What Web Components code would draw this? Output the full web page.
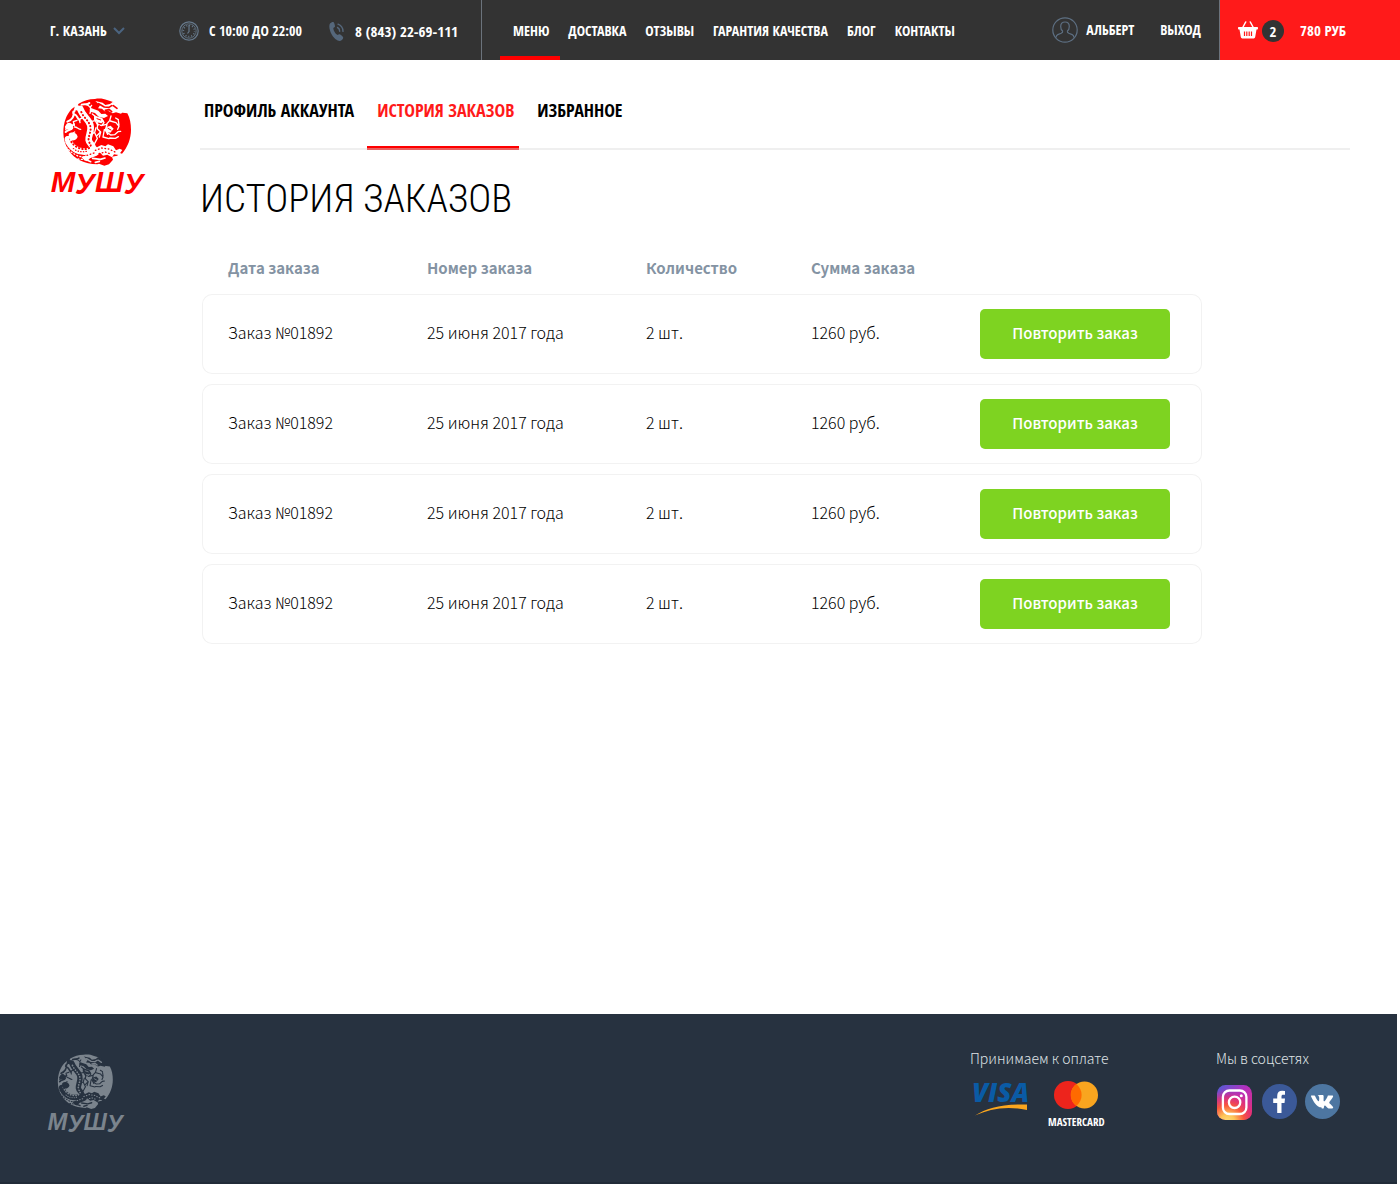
<!DOCTYPE html>
<html lang="ru">
<head>
<meta charset="utf-8">
<meta name="viewport" content="width=device-width, initial-scale=1">
<title>Мушу — история заказов</title>
<style>
  :root {
    --font-head: "Open Sans Condensed", "Roboto Condensed", sans-serif;
    --font-title: "Roboto Condensed", "Roboto", sans-serif;
    --font-body: "Noto Sans CJK SC", "Noto Sans", sans-serif;
    --red: #ff1a1a;
    --dark: #333333;
  }
  body { margin: 0; background: #fff; font-family: var(--font-body); color: #000; }
</style>
</head>
<body>
<account-page>
  <top-bar slot="header"></top-bar>
  <mushu-logo slot="logo"></mushu-logo>
  <account-tabs></account-tabs>
  <order-history></order-history>
  <page-footer slot="footer"></page-footer>
</account-page>

<script>
function define(name, html, setup) {
  const tpl = document.createElement('template');
  tpl.innerHTML = html;
  customElements.define(name, class extends HTMLElement {
    constructor() {
      super();
      this.attachShadow({ mode: 'open' }).append(tpl.content.cloneNode(true));
      if (setup) setup(this.shadowRoot, this);
    }
  });
}

define('account-page', `
<style>
  :host { display: flex; flex-direction: column; min-height: 100vh; }
  main { flex: 1; display: flex; padding: 0 50px; }
  aside { flex: none; width: 150px; padding-top: 38px; }
  section { flex: 1; min-width: 0; }
</style>
<slot name="header"></slot>
<main>
  <aside><slot name="logo"></slot></aside>
  <section><slot></slot></section>
</main>
<slot name="footer"></slot>`);

define('mushu-logo', `
<style>
  :host { display: block; width: 96px; color: #f00; --hole: #fff; }
  svg { display: block; width: 100%; height: auto; overflow: visible; }
  .h { fill: var(--hole); }
  .hs { fill: none; stroke: var(--hole); stroke-linecap: round; stroke-linejoin: round; }
  .rs { fill: none; stroke: currentColor; stroke-linecap: round; stroke-linejoin: round; }
  text { font: italic 700 88px "Liberation Sans", sans-serif; fill: currentColor; }
</style>
<svg viewBox="30 24 288 297" role="img" aria-label="Мушу">
  <path fill="currentColor" d="M165 27c12-3 27-1 36 3l18 6 14 10 8 9-5 5 12 8 14 2c8 14 11 31 11 49 0 27-10 52-27 72l-8-3-6 9-16 3 3 9-12 14-14 4-16-6-5 2c-40-1-68-15-86-42-10-15-16-35-16-53 0-30 9-54 25-71l8-6 8-3 5-7c15-9 30-14 49-14Z"/>
  <!-- tail and body -->
  <path class="hs" stroke-width="20" d="M121 57c7 22 25 30 30 48 5 20-7 32-5 45 2 12 16 15 10 26-7 12-35 11-49 2-12-8-20-18-23-30"/>
  <path class="rs" stroke-width="6" stroke-dasharray="1 9" d="M124 66c7 18 23 26 27 43 4 18-7 28-5 42 2 11 10 14 4 21-8 8-27 7-40-1-11-7-16-14-20-24"/>
  <path class="rs" stroke-width="4" stroke-dasharray="1 7" d="M139 184c-15 4-32 0-43-12"/>
  <!-- whorls left of the body -->
  <path class="hs" stroke-width="6" d="M111 45c-8 8-3 17-12 24M82 95c14-5 23-19 18-30M104 73c9 3 7 14 15 17M78 111c10-5 18 2 24-8M77 126c8-8 15-4 20-13M125 44c8-3 17 2 23-5"/>
  <path class="hs" stroke-width="4" d="M79 142c11-2 16-12 25-16M104 111c8 0 11 7 18 7M130 82l-12 6 2 10M111 91l-11 4 3 12M150 70c5-9-4-16 5-24M138 44c11 2 16 12 15 20"/>
  <path class="h" d="M77 106c6-11 15-9 20-2 5 10 0 17-7 16-5-3-12-2-15 2ZM86 132c9-8 24-4 27 8-2 11-18 15-25 8ZM104 50c7-7 16-4 18 3-2 8-10 10-16 7Z"/>
  <path class="hs" stroke-width="4" stroke-dasharray="3 7" d="M79 172l14 14 22 13 16 2M85 165l20 20 27 5M91 206l25 9M114 207l20 2M78 158l15 12"/>
  <!-- cloud at the top -->
  <path class="h" d="M166 33l22 5 8 7 14-3 9-7 15 8 9 11 11 7-11 10-15-4-10 3-14-8-10 2-8-8-12-1 6-9Z"/>
  <path class="rs" stroke-width="5" d="M176 41l17 10 14 1 8-5M196 61l12-2 7 6M220 47l11 8"/>
  <path class="h" d="M153 54l22 8 9 10 12-1 8 7-12 6-16-4-11-11-15-4Z"/>
  <!-- head, jaws and claws -->
  <path class="hs" stroke-width="4" d="M157 72l12 10 16 3 7 13-7 9-13-4-6-11-11 2M173 98l-1 18 10 10-4 15M184 107l15-4 10-11 4-14M201 104l-5 15 7 14M211 93l17 5 9 11-4 9M199 125l13 10 12-1 10-9 8-1M193 119l-4 22 18 5M235 92l2 13M227 84l8 5M209 144l17 1 9-5"/>
  <path class="h" d="M162 76l20 7 10 11-8 6-12-3-10-8ZM199 111l13-4 9 9-10 12-14-3Z"/>
  <path class="rs" stroke-width="3" d="M171 86l11 4M204 115l9 5M178 107l7 6"/>
  <path class="hs" stroke-width="4" d="M151 134l13-7 4-14M164 128l8 17-8 15M181 127l-9 9"/>
  <!-- foam at the bottom -->
  <path class="h" d="M159 163l12 9 13-7 12 4 8-6 16 6 8 12 11-5 8 4-11 15-14-2-6 9-14-8-13 3-8-8-11 8-20 8-9 9-8-3-9-10 12-4Z"/>
  <path class="rs" stroke-width="4" stroke-dasharray="2 8" d="M166 181l20-7 20 3 19 9M177 191l19-5 18 7M141 196l21-7"/>
  <path class="hs" stroke-width="5" d="M134 207l18 8M158 205l23 3 14-4M166 217l12-3"/>
  <text x="32" y="306 313 306 313">МУШУ</text>
</svg>`);

define('top-bar', `
<style>
  :host { display: block; background: var(--dark); color: #fff; font: 700 14px/60px var(--font-head); white-space: nowrap; }
  header { display: flex; height: 60px; }
  a, button { color: inherit; font: inherit; text-decoration: none; }
  svg { display: block; flex: none; }
  .info { display: flex; padding-left: 50px; border-right: 1px solid #6b737c; }
  .info > * { display: flex; align-items: center; box-sizing: border-box; height: 62px; }
  .city { width: 129px; gap: 6px; padding: 0; border: 0; background: none; text-align: left; }
  .hours { width: 150px; gap: 10px; }
  .phone { width: 152px; gap: 10px; font-size: 15px; }
  nav { display: flex; gap: 19px; padding-left: 31px; line-height: 62px; }
  nav a { position: relative; }
  nav a[aria-current]::after { content: ""; position: absolute; left: -13px; right: -11px; top: 56px; height: 4px; background: #f00; }
  .user { display: flex; margin-left: auto; gap: 26px; padding-right: 18px; }
  .user a { display: flex; align-items: center; gap: 8px; }
  .cart { box-sizing: border-box; width: 181px; display: flex; align-items: center; padding-left: 18px; background: var(--red); border-left: 1px solid #6b737c; font-size: 15px; }
  .count { width: 22px; margin: 2px 16px 0 4px; border-radius: 50%; background: var(--dark); text-align: center; line-height: 22px; }
</style>
<header>
  <div class="info">
    <button class="city" type="button">Г. КАЗАНЬ
      <svg width="12" height="8" viewBox="0 0 12 8" fill="none" stroke="#4b6480" stroke-width="2"><path d="M1 1l5 5 5-5"/></svg>
    </button>
    <span class="hours">
      <svg width="20" height="20" viewBox="0 0 20 20" fill="none" stroke="#66788a"><circle cx="10" cy="10" r="9.2" stroke-width="1.2"/><circle cx="10" cy="10" r="7.2" stroke-width=".8"/><circle cx="10" cy="10" r="5.6" stroke-width="1.6" stroke-dasharray="1 1.93" stroke-dashoffset=".5"/><path d="M10 4v6.500l-1.500 2" stroke-width="1.200"/></svg>
      С 10:00 ДО 22:00
    </span>
    <a class="phone" href="tel:+78432269111">
      <svg width="16" height="20" viewBox="0 0 16 20"><path fill="#55677b" d="M1 2.500C2 1.500 3.500.7 4.300 1c.8.200 1.900 3.600 1.700 4.600-.2.900-1.800 1-1.700 2 .2 2.300 2 5.200 3.900 6.200.9.500 1.600-.8 2.500-.6 1 .2 3.500 2.600 3.500 3.500 0 1-1.700 3-3.200 3.200C8.500 20.200 5 17.300 3 14 .8 10.300-.6 5 1 2.500Z"/><path d="M8.500 6.500c1.300.6 2.200 1.900 2.200 3.700M9 3.200c2.900 1 4.900 3.700 5 7.200" fill="none" stroke="#55677b" stroke-width="1.400" stroke-linecap="round"/></svg>
      8 (843) 22-69-111
    </a>
  </div>
  <nav>
    <a href="#menu" aria-current="page">МЕНЮ</a>
    <a href="#delivery">ДОСТАВКА</a>
    <a href="#reviews">ОТЗЫВЫ</a>
    <a href="#quality">ГАРАНТИЯ КАЧЕСТВА</a>
    <a href="#blog">БЛОГ</a>
    <a href="#contacts">КОНТАКТЫ</a>
  </nav>
  <div class="user">
    <a href="#profile">
      <svg width="26" height="26" viewBox="0 0 26 26" fill="none" stroke="#5d6f82" stroke-width="1.200"><circle cx="13" cy="13" r="12.200"/><path d="M13 5c2.800 0 4.300 1.800 4.300 4.500 0 1.900-.7 3.700-1.900 4.600-.3 1.300.2 1.700 1.400 2.200l3.400 1.300c.9.400 1.600 1.500 1.900 2.900M13 5c-2.800 0-4.300 1.800-4.300 4.500 0 1.900.7 3.700 1.900 4.600.3 1.300-.2 1.700-1.400 2.200l-3.400 1.300c-.9.400-1.600 1.500-1.900 2.900"/></svg>
      АЛЬБЕРТ
    </a>
    <a href="#exit">ВЫХОД</a>
  </div>
  <a class="cart" href="#cart">
    <svg width="20" height="18" viewBox="0 0 20 18"><path fill="#fff" d="M.7 6h18.600q.7 0 .7.800v.8q0 .9-.8.900h-.7l-1.300 7.600q-.2 1.400-1.500 1.400H4.300q-1.300 0-1.500-1.400L1.500 8.500H.8Q0 8.500 0 7.600v-.8Q0 6 .7 6Z"/><path d="M5 6l2.700-5M15 6l-2.700-5" stroke="#fff" stroke-width="1.500" stroke-linecap="round"/><path d="M6.500 10.500v4.500M8.800 10.500v4.500M11.200 10.500v4.500M13.500 10.500v4.500" stroke="#ff1a1a" stroke-width="1.200"/></svg>
    <span class="count">2</span>780 РУБ
  </a>
</header>`);

define('account-tabs', `
<style>
  :host { display: block; }
  nav { display: flex; gap: 8px; height: 88px; border-bottom: 2px solid #efefef; font: 700 18px/100px var(--font-head); white-space: nowrap; }
  a { box-sizing: border-box; height: 90px; padding: 0 5px 0 10px; color: #000; text-decoration: none; }
  a:first-child { padding-left: 4px; }
  a[aria-current] { color: var(--red); border-bottom: 2px solid #e96060; box-shadow: inset 0 -2px #f00; }
</style>
<nav>
  <a href="#profile">ПРОФИЛЬ АККАУНТА</a>
  <a href="#history" aria-current="page">ИСТОРИЯ ЗАКАЗОВ</a>
  <a href="#favourites">ИЗБРАННОЕ</a>
</nav>`);

define('order-history', `
<style>
  :host { display: block; }
  h1 { margin: 24px 0 30px; font: 300 39px/50px var(--font-title); color: #000; }
  table { width: 100%; max-width: 1000px; margin-left: 2px; table-layout: fixed; border-collapse: separate; border-spacing: 0 10px; margin-top: -10px; font-size: 16px; line-height: 24px; }
  th { height: 28px; padding: 0 0 2px; text-align: left; color: #8493a3; font-weight: 700; font-size: 15px; }
  td { height: 74px; padding: 0 0 4px; font-weight: 300; border: solid #f2f2f2; border-width: 1px 0; }
  th:first-child { padding-left: 26px; }
  td:first-child { padding-left: 25px; border-left-width: 1px; border-radius: 10px 0 0 10px; }
  td:last-child { height: 78px; padding: 0; border-right-width: 1px; border-radius: 0 10px 10px 0; }
  button { display: block; width: 190px; height: 50px; padding: 0 0 2px; border: 0; border-radius: 5px; background: #7ed321; color: #fff; font: 500 15px/24px var(--font-body); }
</style>
<h1>ИСТОРИЯ ЗАКАЗОВ</h1>
<table>
  <colgroup><col style="width:225px"><col style="width:219px"><col style="width:165px"><col style="width:169px"><col></colgroup>
  <thead><tr><th>Дата заказа</th><th>Номер заказа</th><th>Количество</th><th>Сумма заказа</th><th></th></tr></thead>
  <tbody></tbody>
</table>`, root => {
  const orders = Array.from({ length: 4 }, () => ['Заказ №01892', '25 июня 2017 года', '2 шт.', '1260 руб.']);
  const body = root.querySelector('tbody');
  for (const order of orders) {
    const row = body.insertRow();
    for (const value of order) row.insertCell().textContent = value;
    const button = document.createElement('button');
    button.type = 'button';
    button.textContent = 'Повторить заказ';
    row.insertCell().append(button);
  }
});

define('page-footer', `
<style>
  :host { display: block; margin-right: 3px; background: #273240; color: #dfe2e5; border-bottom: 2px solid #212b38; }
  footer { display: flex; min-height: 134px; padding: 34px 0 0 47px; }
  mushu-logo { width: 78px; margin-top: 6px; color: #7b848d; --hole: #273240; }
  .pay { width: 246px; margin-left: auto; }
  .social { width: 181px; }
  p { margin: 0 0 13px; font-weight: 300; font-size: 14px; line-height: 20px; white-space: nowrap; }
  .row { display: flex; }
  svg { display: block; overflow: visible; }
  .cards { gap: 18px; margin-left: 2px; }
  figure { margin: 0; }
  figure svg { margin: 0 auto; }
  figcaption { margin-top: 5px; color: #fff; font: 700 11px/16px var(--font-head); }
  .links { gap: 8px; padding: 3px 0 0 1px; }
  a { display: block; }
</style>
<footer>
  <mushu-logo></mushu-logo>
  <div class="pay">
    <p>Принимаем к оплате</p>
    <div class="row cards">
      <svg width="58" height="36" viewBox="0 0 58 36" role="img" aria-label="Visa"><text x="0" y="21" font-family="Open Sans, sans-serif" font-size="26" font-weight="800" font-style="italic" fill="#0a5ba5">VISA</text><path fill="#faa61e" d="M3 34.500C15 27 30 23 55 23.500v5.500C34 24.500 18 28 3 34.500Z"/></svg>
      <figure>
        <svg width="44" height="28" viewBox="0 0 44 28"><circle cx="14" cy="14" r="14" fill="#ed241c"/><circle cx="30.500" cy="14" r="13.500" fill="#f9a51f"/><path fill="#ff6a00" d="M22.300 3a14 14 0 0 1 0 22 13.500 13.500 0 0 1 0-22Z"/></svg>
        <figcaption>MASTERCARD</figcaption>
      </figure>
    </div>
  </div>
  <div class="social">
    <p>Мы в соцсетях</p>
    <div class="row links">
      <a href="#instagram" aria-label="Instagram"><svg width="36" height="36" viewBox="0 0 36 36"><defs><linearGradient id="a" x1="0" y1="0" x2="1" y2="1"><stop offset="0" stop-color="#4c5fd7"/><stop offset=".45" stop-color="#b52fbd"/><stop offset="1" stop-color="#e7306f"/></linearGradient><radialGradient id="b" cx=".3" cy="1.050" r=".95"><stop offset="0" stop-color="#ffdd77"/><stop offset=".22" stop-color="#fdc558"/><stop offset=".5" stop-color="#f9573d"/><stop offset=".75" stop-color="#e8306f" stop-opacity=".7"/><stop offset="1" stop-color="#c22fae" stop-opacity="0"/></radialGradient></defs><rect y="1" width="35" height="35" rx="8.500" fill="url(#a)"/><rect y="1" width="35" height="35" rx="8.500" fill="url(#b)"/><g fill="none" stroke="#fff" stroke-width="2.300"><rect x="5.900" y="6.500" width="23.500" height="23.500" rx="6.500"/><circle cx="17.600" cy="18.300" r="5.700"/></g><circle cx="24.300" cy="11.700" r="1.500" fill="#fff"/></svg></a>
      <a href="#facebook" aria-label="Facebook"><svg width="36" height="36" viewBox="0 0 36 36"><circle cx="18.500" cy="17.500" r="17.500" fill="#3b5998"/><path fill="#fff" d="M16.200 29v-10h-4v-4.400h4v-2.700c0-3.400 1.800-5.200 5-5.200l2.800.2v3.900h-1.800c-1.300 0-1.700.6-1.700 1.700v2.100h3.500l-.5 4.400h-3V29Z"/></svg></a>
      <a href="#vk" aria-label="ВКонтакте"><svg width="36" height="36" viewBox="0 0 36 36"><circle cx="17.500" cy="17.500" r="17.500" fill="#4d76a1"/><path fill="#fff" d="M16.700 24.500h1.400s.4 0 .6-.3c.2-.2.200-.6.200-.6s0-1.800.8-2.100c.8-.3 1.900 1.800 3 2.500.9.600 1.500.5 1.500.5h3s1.600-.1.800-1.400c-.1-.1-.5-1-2.400-2.800-2-1.900-1.700-1.600.7-4.800 1.400-1.900 2-3.100 1.800-3.600-.2-.5-1.200-.4-1.200-.4h-3.400s-.3 0-.5.100c-.2.100-.3.400-.3.400s-.5 1.500-1.300 2.700c-1.500 2.600-2.100 2.700-2.400 2.600-.6-.4-.4-1.500-.4-2.300 0-2.500.4-3.600-.7-3.900-.4-.1-.7-.1-1.600-.1-1.200 0-2.300 0-2.900.3-.4.200-.7.600-.5.700.2 0 .7.100 1 .5.300.5.300 1.500.3 1.500s.2 2.900-.5 3.200c-.4.300-1.100-.3-2.400-2.600-.7-1.200-1.200-2.500-1.200-2.500s-.1-.2-.3-.4c-.2-.1-.5-.2-.5-.2H6.700s-.5 0-.7.200c-.1.200 0 .5 0 .5s2.500 5.900 5.400 8.800c2.500 2.600 5.300 2.500 5.300 2.500Z"/></svg></a>
    </div>
  </div>
</footer>`);
</script>
</body>
</html>
